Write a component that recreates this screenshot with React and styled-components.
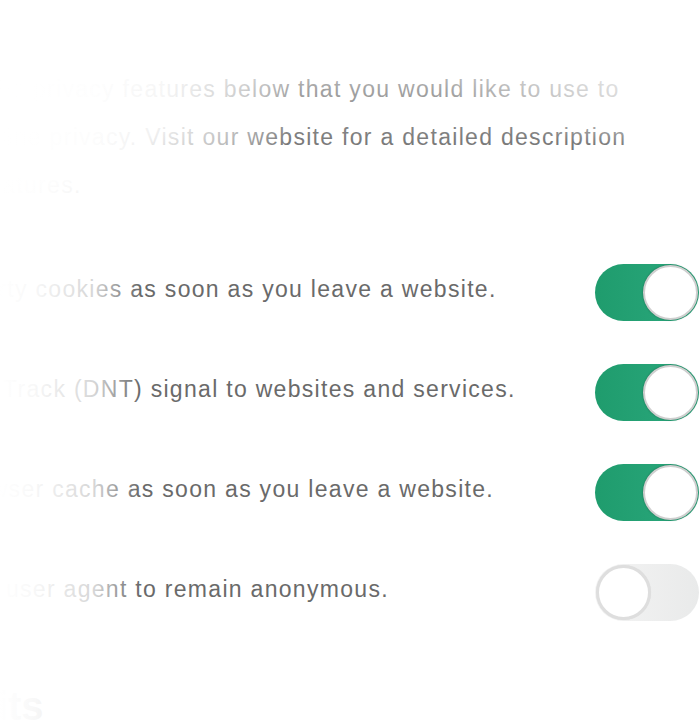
import React from 'react'
import styled, { createGlobalStyle } from 'styled-components'

const intro = [
  'Please select the privacy features below that you would like to use to',
  'protect your online privacy. Visit our website for a detailed description',
  'of these four features.'
]

const options = [
  { text: 'Delete third-party cookies as soon as you leave a website.', on: true },
  { text: 'Send a Do Not Track (DNT) signal to websites and services.', on: true },
  { text: 'Delete the browser cache as soon as you leave a website.', on: true },
  { text: 'Use a common user agent to remain anonymous.', on: false }
]

const GlobalStyle = createGlobalStyle`
  html, body {
    margin: 0;
    padding: 0;
    background: #ffffff;
  }
  body {
    font-family: 'Liberation Sans', Arial, sans-serif;
    overflow: hidden;
  }
`

export default function App() {
  return (
    <>
      <GlobalStyle />
      <Page>
        <Sheet>
          <Intro>
            {intro.map((line) => (
              <IntroLine key={line}>{line}</IntroLine>
            ))}
          </Intro>
          <OptionList>
            {options.map((opt) => (
              <Option key={opt.text}>
                <OptionText>{opt.text}</OptionText>
                <Switch $on={opt.on}>
                  <Knob $on={opt.on} />
                </Switch>
              </Option>
            ))}
          </OptionList>
          <SectionTitle>Data Limits</SectionTitle>
        </Sheet>
        <Fade />
      </Page>
    </>
  )
}

const Page = styled.div`
  position: relative;
  width: 700px;
  height: 720px;
  overflow: hidden;
  background: #ffffff;
`

const Sheet = styled.div`
  margin-left: -172px;
  width: 871px;
  padding-top: 65px;
  color: #6a6a6a;
`

const Intro = styled.div`
  font-size: 23px;
  line-height: 48px;
  letter-spacing: 1.3px;
  white-space: nowrap;
`

const IntroLine = styled.div`
  display: block;
`

const OptionList = styled.div`
  margin-top: 55px;
  display: flex;
  flex-direction: column;
  gap: 43px;
`

const Option = styled.div`
  display: flex;
  align-items: center;
  justify-content: space-between;
  height: 57px;
`

const OptionText = styled.span`
  font-size: 23px;
  line-height: 30px;
  letter-spacing: 1.3px;
  white-space: nowrap;
  margin-bottom: 8px;
`

const Switch = styled.div`
  width: 104px;
  height: 57px;
  border-radius: 29px;
  flex-shrink: 0;
  display: flex;
  align-items: center;
  justify-content: ${(p) => (p.$on ? 'flex-end' : 'flex-start')};
  padding: 0 1px;
  box-sizing: border-box;
  background: ${(p) =>
    p.$on
      ? 'linear-gradient(to right, #1f9c6d, #2ba87d)'
      : 'linear-gradient(to right, #f4f4f4, #e9eaea)'};
`

const Knob = styled.div`
  width: 55px;
  height: 55px;
  border-radius: 50%;
  background: #ffffff;
  box-sizing: border-box;
  border: ${(p) => (p.$on ? '2px solid #cfcfcf' : '3px solid #dedede')};
  box-shadow: ${(p) =>
    p.$on ? '0 0 2px rgba(0, 0, 0, 0.35)' : '0 0 1px rgba(0, 0, 0, 0.08)'};
`

const SectionTitle = styled.h2`
  margin: 65px 0 0;
  font-size: 40px;
  line-height: 40px;
  font-weight: 700;
  color: #777777;
  white-space: nowrap;
`

const Fade = styled.div`
  position: absolute;
  inset: 0;
  pointer-events: none;
  background:
    radial-gradient(ellipse 260px 60px at 700px 90px, rgba(255,255,255,0.85) 0%, rgba(255,255,255,0.5) 50%, rgba(255,255,255,0) 100%),
    linear-gradient(to bottom, #ffffff 30px, rgba(255,255,255,0.38) 90px, rgba(255,255,255,0.12) 140px, rgba(255,255,255,0) 175px),
    radial-gradient(ellipse 300px 150px at 0px 100px, #ffffff 0%, rgba(255,255,255,0.9) 55%, rgba(255,255,255,0.5) 80%, rgba(255,255,255,0) 100%),
    linear-gradient(to right, #ffffff 0px, rgba(255,255,255,0.95) 35px, rgba(255,255,255,0.72) 95px, rgba(255,255,255,0.3) 120px, rgba(255,255,255,0) 140px);
`
